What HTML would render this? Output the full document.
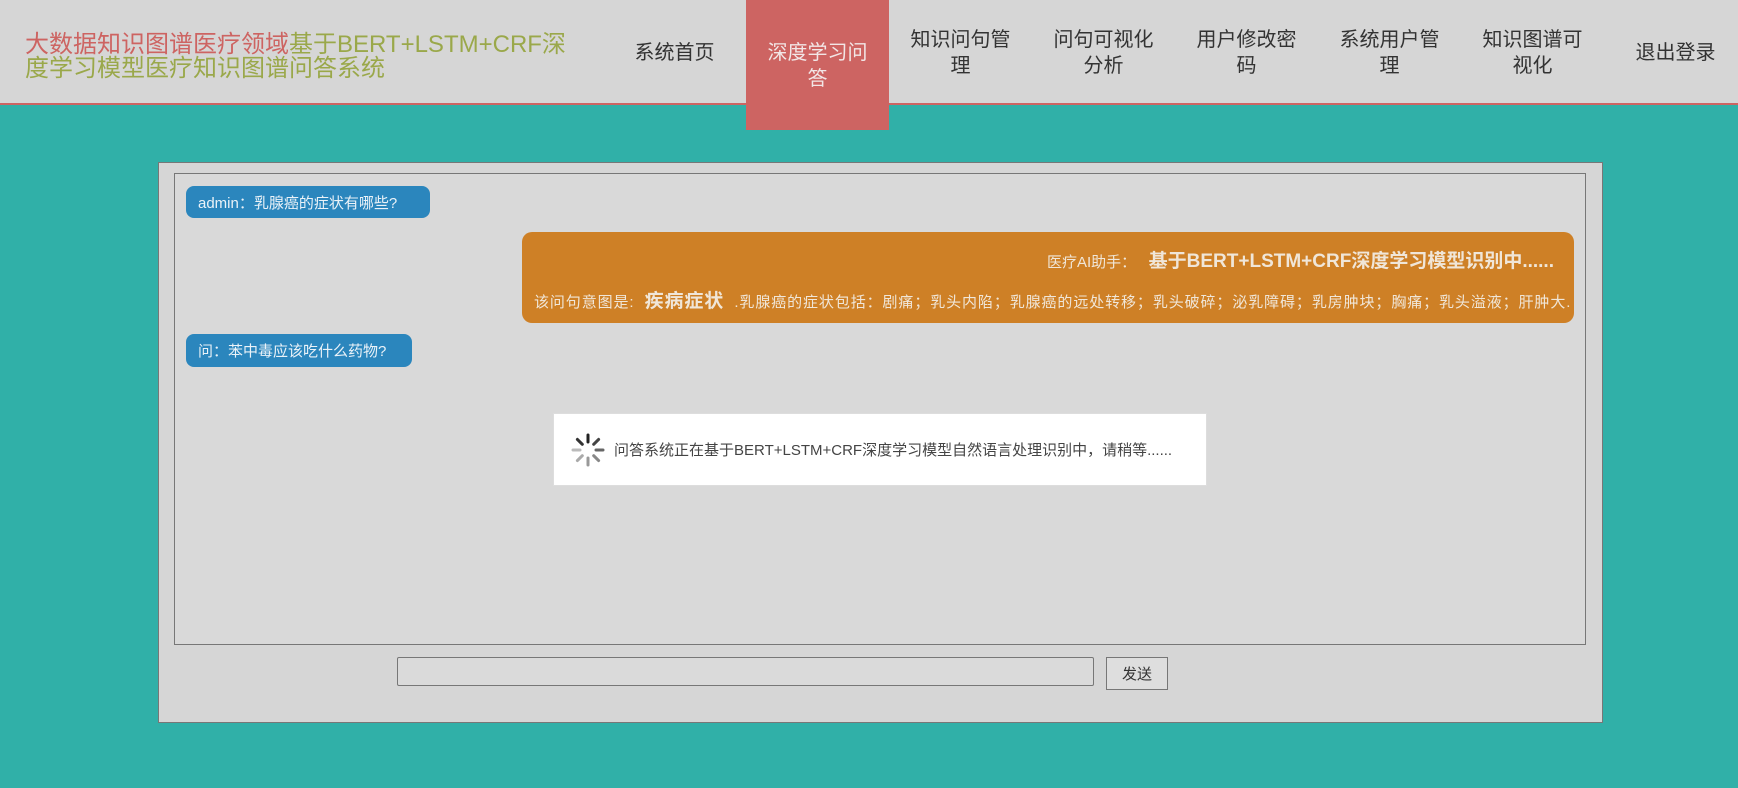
<!DOCTYPE html>
<html><head><meta charset="utf-8"><style>
*{margin:0;padding:0;box-sizing:border-box}
body{width:1738px;height:788px;background:#30b0a8;font-family:"Liberation Sans","Noto Sans CJK SC",sans-serif;position:relative;overflow:hidden}
.hdr{position:absolute;left:0;top:0;width:1738px;height:105px;background:#d6d6d6;border-bottom:2px solid #cd6462}
.title{position:absolute;left:25px;top:33px;font-size:24px;line-height:24px;color:#9aa84a;width:545px}
.title span{color:#cd6462}
.nav{position:absolute;top:0;width:143px;height:105px;display:flex;align-items:center;justify-content:center;text-align:center;font-size:20px;line-height:26px;color:#333;padding:0 20px}
.nav.act{background:#cd6462;color:#f2e6e6;height:130px;align-items:flex-start;padding-top:40px}
.panel{position:absolute;left:158px;top:162px;width:1445px;height:561px;background:#d6d6d6;border:1px solid #777}
.inner{position:absolute;left:174px;top:173px;width:1412px;height:472px;background:#d9d9d9;border:1px solid #777}
.b{position:absolute;background:#2b86bd;color:#eaf2f8;font-size:15px;border-radius:8px;padding:0 12px;display:flex;align-items:center}
.o{position:absolute;left:522px;top:232px;width:1052px;height:91px;background:#ce8026;border-radius:10px;color:#f0e6d8;font-size:15px}
.load{position:absolute;left:553px;top:413px;width:654px;height:73px;background:#fff;border:1px solid #ddd;font-size:15px;color:#444;display:flex;align-items:center;padding-left:16px}
.inp{position:absolute;left:397px;top:657px;width:697px;height:29px;border:1px solid #777;background:#dadada;border-radius:2px}
.btn{position:absolute;left:1106px;top:657px;width:62px;height:33px;border:1px solid #777;background:#dedede;font-size:15px;color:#333;display:flex;align-items:center;justify-content:center}
</style></head><body>
<div class="hdr">
<div class="title"><span>大数据知识图谱医疗领域</span>基于BERT+LSTM+CRF深度学习模型医疗知识图谱问答系统</div>
</div>
<div class="nav" style="left:603px">系统首页</div>
<div class="nav act" style="left:746px">深度学习问答</div>
<div class="nav" style="left:889px">知识问句管理</div>
<div class="nav" style="left:1032px">问句可视化分析</div>
<div class="nav" style="left:1175px">用户修改密码</div>
<div class="nav" style="left:1318px">系统用户管理</div>
<div class="nav" style="left:1461px">知识图谱可视化</div>
<div class="nav" style="left:1604px">退出登录</div>
<div class="panel"></div>
<div class="inner"></div>
<div class="b" style="left:186px;top:186px;width:244px;height:32px">admin：乳腺癌的症状有哪些?</div>
<div class="o">
<div style="position:absolute;right:20px;top:14px;white-space:nowrap">医疗AI助手： &nbsp; <b style="font-size:19px">基于BERT+LSTM+CRF深度学习模型识别中......</b></div>
<div style="position:absolute;left:12px;top:54px;white-space:nowrap;letter-spacing:0.9px">该问句意图是: &nbsp;<b style="font-size:19px">疾病症状</b> &nbsp;.乳腺癌的症状包括：剧痛；乳头内陷；乳腺癌的远处转移；乳头破碎；泌乳障碍；乳房肿块；胸痛；乳头溢液；肝肿大.</div>
</div>
<div class="b" style="left:186px;top:334px;width:226px;height:33px">问：苯中毒应该吃什么药物?</div>
<div class="load">
<svg width="36" height="36" viewBox="-18 -18 36 36" style="margin-right:8px">
<g stroke-width="3" stroke-linecap="round">
<line x1="0" y1="-8" x2="0" y2="-15" stroke="#222"/>
<line x1="5.7" y1="-5.7" x2="10.6" y2="-10.6" stroke="#444"/>
<line x1="8" y1="0" x2="15" y2="0" stroke="#666"/>
<line x1="5.7" y1="5.7" x2="10.6" y2="10.6" stroke="#888"/>
<line x1="0" y1="8" x2="0" y2="15" stroke="#999"/>
<line x1="-5.7" y1="5.7" x2="-10.6" y2="10.6" stroke="#aaa"/>
<line x1="-8" y1="0" x2="-15" y2="0" stroke="#bbb"/>
<line x1="-5.7" y1="-5.7" x2="-10.6" y2="-10.6" stroke="#333"/>
</g></svg>
问答系统正在基于BERT+LSTM+CRF深度学习模型自然语言处理识别中，请稍等......</div>
<div class="inp"></div>
<div class="btn">发送</div>
</body></html>
